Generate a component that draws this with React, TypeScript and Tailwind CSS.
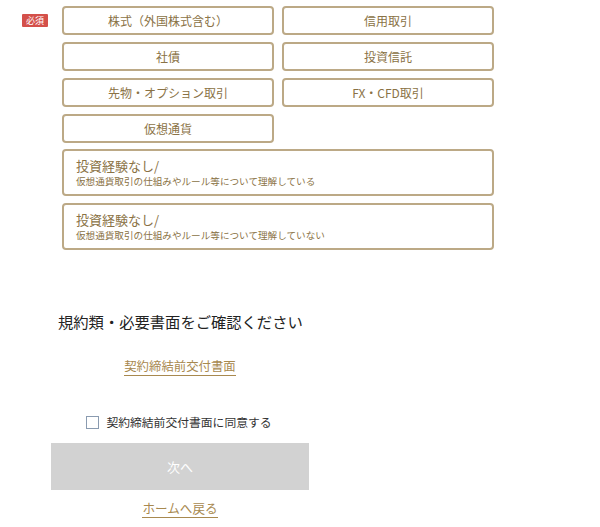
import React, { useState } from 'react';

const font = "font-['Noto_Sans_CJK_JP','Noto_Sans',sans-serif]";

// 経験の選択肢（左右2列）
const options = [
  '株式（外国株式含む）',
  '信用取引',
  '社債',
  '投資信託',
  '先物・オプション取引',
  'FX・CFD取引',
  '仮想通貨',
];

const cryptoOptions = [
  '仮想通貨取引の仕組みやルール等について理解している',
  '仮想通貨取引の仕組みやルール等について理解していない',
];

function OptionButton({ label }: { label: string }) {
  return (
    <button className="h-[29px] rounded-[4px] border-2 border-[#bca986] bg-white text-[12px] text-[#8a7245]">
      {label}
    </button>
  );
}

export default function App() {
  const [agreed, setAgreed] = useState(false);

  return (
    <div className={`${font} w-[600px] h-[527px] overflow-hidden bg-white`}>
      <div className="flex pt-[6px]">
        <div className="w-[62px] pl-[22px] pt-[8px]">
          <span className="flex h-[13px] w-[26px] items-center justify-center rounded-[1px] bg-[#d4504a] text-[9px] leading-none text-white">
            必須
          </span>
        </div>
        <div className="w-[432px]">
          <div className="grid grid-cols-2 gap-x-[8px] gap-y-[7px]">
            {options.map((o) => (
              <OptionButton key={o} label={o} />
            ))}
          </div>
          <div className="mt-[6px] flex flex-col gap-[7px]">
            {cryptoOptions.map((c) => (
              <button
                key={c}
                className="flex h-[47px] flex-col items-start justify-center rounded-[4px] border-2 border-[#bca986] bg-white pl-[12px] text-left text-[#8a7245]"
              >
                <span className="text-[13px] leading-[17px]">投資経験なし/</span>
                <span className="text-[9.6px] leading-[14px]">{c}</span>
              </button>
            ))}
          </div>
        </div>
      </div>

      <div className="ml-[51px] mt-[59px] w-[258px]">
        <h2 className="pl-[7px] text-[15.3px] leading-[24px] text-[#222]">
          規約類・必要書面をご確認ください
        </h2>
        <div className="mt-[25px] flex justify-center">
          <a className="border-b border-[#a8894f] pb-[1px] text-[12.4px] leading-[16px] text-[#a8894f]">
            契約締結前交付書面
          </a>
        </div>
        <label className="mt-[38px] flex items-center justify-center gap-[7px] pr-[2px]">
          <input
            type="checkbox"
            checked={agreed}
            onChange={(e) => setAgreed(e.target.checked)}
            className="h-[13px] w-[13px] appearance-none border border-[#8a9bb0] bg-white"
          />
          <span className="text-[11.8px] leading-[16px] text-[#333]">契約締結前交付書面に同意する</span>
        </label>
        <button className="mt-[13px] flex h-[47px] w-[258px] items-center justify-center bg-[#d2d2d2] text-[13px] text-white">
          次へ
        </button>
        <div className="mt-[10px] flex justify-center">
          <a className="border-b border-[#a8894f] pb-[1px] text-[12.6px] leading-[16px] text-[#a8894f]">
            ホームへ戻る
          </a>
        </div>
      </div>
    </div>
  );
}
